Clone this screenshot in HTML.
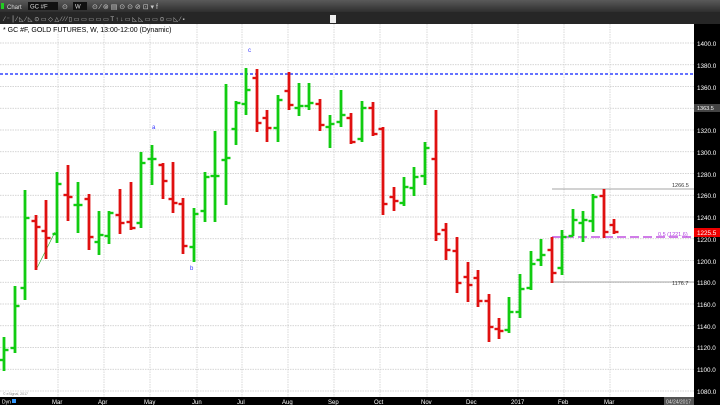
<!DOCTYPE html>
<html><head><meta charset="utf-8"><style>
html,body{margin:0;padding:0;width:720px;height:405px;overflow:hidden;background:#000;font-family:"Liberation Sans",sans-serif}
svg{display:block}
</style></head><body>
<svg id="s" width="720" height="405" xmlns="http://www.w3.org/2000/svg" font-family="Liberation Sans, sans-serif">
<defs><linearGradient id="tb" x1="0" y1="0" x2="0" y2="1"><stop offset="0" stop-color="#5a5a5a"/><stop offset="1" stop-color="#2e2e2e"/></linearGradient></defs>
<rect x="0" y="0" width="720" height="12" fill="url(#tb)"/>
<rect x="0" y="12" width="720" height="12" fill="#262626"/>
<rect x="1" y="3" width="3" height="6" fill="#2c2"/>
<text x="7" y="9" font-size="6" fill="#ddd">Chart</text>
<rect x="28" y="2" width="30" height="8" fill="#111"/><text x="30" y="8.5" font-size="6" fill="#ddd">GC #F</text>
<rect x="73" y="2" width="14" height="8" fill="#111"/><text x="75" y="8.5" font-size="6" fill="#ddd">W</text>
<text x="62" y="9" font-size="7" fill="#ccc">⊙</text><text x="92" y="9" font-size="7" fill="#ccc">⊙  ⁄  ⊚  ▤  ⊙  ⊙  ⊘  ⊡  ▾  f</text>
<text x="4" y="21" font-size="6" fill="#bbb">⁄ ⁻ ⎮ ⁄ ◺ ⁄ ◺ ⊙ ▭ ◇ △ ⁄ ⁄  ⁄ ▯ ▭ ▭ ▭ ▭ ▭  T ↑ ↓ ▭  ◺ ◺ ▭ ▭ ⊙ ▭ ◺  ⁄ ▪</text>
<rect x="330" y="15" width="6" height="8" fill="#eee"/>
<rect x="0" y="24" width="694" height="373" fill="#fff"/>
<g id="grid" stroke="#c8c8c8" stroke-width="0.7" stroke-dasharray="1.5,1"></g>
<text x="3" y="32" font-size="7" fill="#000">* GC #F, GOLD FUTURES, W, 13:00-12:00 (Dynamic)</text>
<line x1="0" y1="74" x2="694" y2="74" stroke="#3344ff" stroke-width="1.6" stroke-dasharray="3,2"/>
<line x1="552" y1="189" x2="694" y2="189" stroke="#888" stroke-width="0.7"/>
<line x1="552" y1="282" x2="694" y2="282" stroke="#888" stroke-width="0.7"/>
<line x1="552" y1="237" x2="694" y2="237" stroke="#c050e0" stroke-width="1.6" stroke-dasharray="9,4"/>
<text x="672" y="187" font-size="5.5" fill="#333">1266.5</text>
<text x="672" y="285" font-size="5.5" fill="#333">1176.7</text>
<text x="658" y="236" font-size="5.5" fill="#b040e0">0.5 (1221.6)</text>
<line x1="37" y1="268" x2="55" y2="232" stroke="#2a2" stroke-width="0.6"/>
<g id="bars"></g>
<text x="152" y="129" font-size="6" fill="#33f">a</text>
<text x="190" y="270" font-size="6" fill="#33f">b</text>
<text x="248" y="52" font-size="6" fill="#33f">c</text>
<text x="3" y="395" font-size="3.5" fill="#888">© eSignal, 2017</text>
<rect x="694" y="0" width="26" height="405" fill="#000"/>
<rect x="694" y="0" width="26" height="12" fill="url(#tb)"/>
<rect x="694" y="12" width="26" height="12" fill="#262626"/>
<g font-size="6.3" fill="#fff">
<text x="697" y="46">1400.0</text><text x="697" y="68">1380.0</text><text x="697" y="90">1360.0</text><text x="697" y="111">1340.0</text><text x="697" y="133">1320.0</text><text x="697" y="155">1300.0</text><text x="697" y="177">1280.0</text><text x="697" y="198">1260.0</text><text x="697" y="220">1240.0</text><text x="697" y="242">1220.0</text><text x="697" y="264">1200.0</text><text x="697" y="285">1180.0</text><text x="697" y="307">1160.0</text><text x="697" y="329">1140.0</text><text x="697" y="350">1120.0</text><text x="697" y="372">1100.0</text><text x="697" y="394">1080.0</text>
</g>
<rect x="694" y="104" width="26" height="8" fill="#444"/><text x="697" y="110" font-size="5.5" fill="#fff">1363.5</text>
<rect x="694" y="228" width="26" height="9" fill="#e00"/><text x="697" y="235" font-size="6.3" fill="#fff">1225.5</text>
<rect x="0" y="397" width="720" height="8" fill="#000"/>
<text x="2" y="403.5" font-size="5" fill="#fff">Dyn</text><rect x="12" y="399" width="4" height="4" fill="#39f"/>
<g font-size="6" fill="#fff">
<text x="52" y="404">Mar</text><text x="98" y="404">Apr</text><text x="144" y="404">May</text><text x="192" y="404">Jun</text><text x="237" y="404">Jul</text><text x="282" y="404">Aug</text><text x="328" y="404">Sep</text><text x="374" y="404">Oct</text><text x="421" y="404">Nov</text><text x="466" y="404">Dec</text><text x="511" y="404">2017</text><text x="558" y="404">Feb</text><text x="604" y="404">Mar</text>
</g>
<rect x="664" y="397" width="30" height="8" fill="#555"/><text x="666" y="403.5" font-size="5" fill="#ddd">04/24/2017</text>
</svg>
<script>
var NS="http://www.w3.org/2000/svg",g=document.getElementById("grid"),b=document.getElementById("bars");
function el(p,t,a){var e=document.createElementNS(NS,t);for(var k in a)e.setAttribute(k,a[k]);p.appendChild(e);}
for(var p=1400;p>=1080;p-=20){var y=43+(1400-p)*1.0875;el(g,"line",{x1:0,y1:y,x2:694,y2:y});}
[58,104,150,197,242,288,334,380,427,472,518,564,610].forEach(function(x){el(g,"line",{x1:x,y1:24,x2:x,y2:397});});
var d=[[4,337,371,360,350],[15,286,353,348,306],[25,190,300,288,218],[36,215,270,221,227],[46,200,259,231,238],[57,172,243,234,184],[68,165,221,195,197],[78,182,233,205,205],[89,194,250,199,237],[99,211,255,242,235],[109,211,244,236,213],[120,189,234,215,223],[131,182,230,222,228],[141,152,228,223,163],[152,145,185,159,159],[163,163,199,165,181],[173,162,213,199,203],[183,198,254,204,246],[194,208,262,247,214],[205,172,222,211,177],[215,131,222,176,176],[226,84,205,160,158],[236,101,145,129,103],[246,68,115,104,90],[257,69,132,78,123],[267,110,142,118,128],[278,95,142,128,100],[289,72,110,91,105],[299,83,116,108,106],[309,83,110,106,103],[320,99,131,104,125],[330,115,148,127,124],[341,90,127,122,115],[351,113,144,118,142],[362,101,142,139,108],[373,102,136,108,134],[383,127,215,129,204],[394,187,211,197,201],[404,177,206,203,187],[414,167,196,188,177],[425,142,185,176,148],[436,110,241,159,234],[446,223,260,230,250],[457,237,293,251,283],[468,262,302,277,285],[478,270,307,278,301],[489,294,342,301,327],[499,318,339,329,331],[509,297,333,330,312],[520,274,318,312,289],[531,251,290,288,264],[541,239,266,260,255],[552,237,283,250,273],[562,230,275,268,237],[573,209,236,236,220],[583,211,242,223,220],[593,194,232,221,197],[604,189,238,196,232],[614,219,234,225,232]];
d.forEach(function(r){var c=r[4]<r[3]?"#11cc11":(r[4]>r[3]?"#e01010":(r[0]<300?"#11cc11":"#e01010"));
el(b,"line",{x1:r[0],y1:r[1],x2:r[0],y2:r[2],stroke:c,"stroke-width":2.8});
el(b,"line",{x1:r[0]-4.5,y1:r[3],x2:r[0],y2:r[3],stroke:c,"stroke-width":2.4});
el(b,"line",{x1:r[0],y1:r[4],x2:r[0]+4.5,y2:r[4],stroke:c,"stroke-width":2.4});});
</script>
</body></html>
